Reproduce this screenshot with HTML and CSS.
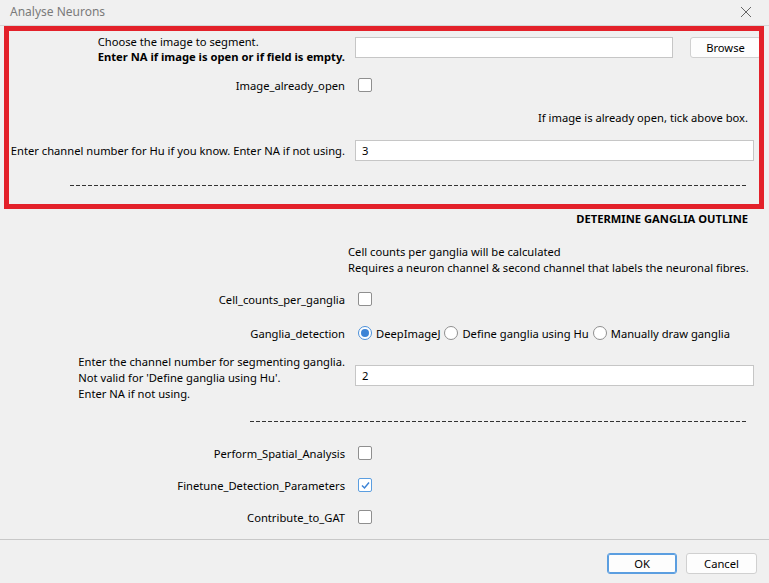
FILE: index.html
```html
<!DOCTYPE html>
<html>
<head>
<meta charset="utf-8">
<link rel="stylesheet" href="styles.css">
</head>
<body>
<div class="window">
  <div class="titlebar">
    <span class="title">Analyse Neurons</span>
    <svg class="close" width="12" height="12" viewBox="0 0 12 12"><path d="M1 1 L11 11 M11 1 L1 11" stroke="#666" stroke-width="1" fill="none"/></svg>
  </div>
  <div class="content">
    <div class="row row1">
      <div class="label"><div class="block">Choose the image to segment.<br><b>Enter NA if image is open or if field is empty.</b></div></div>
      <div class="field field-browse">
        <div class="input input-path"></div>
        <div class="btn browse">Browse</div>
      </div>
    </div>
    <div class="row crow row2">
      <div class="label">Image_already_open</div>
      <div class="field"><span class="cb"></span></div>
    </div>
    <div class="note note1">If image is already open, tick above box.</div>
    <div class="row row3">
      <div class="label nowrap">Enter channel number for Hu if you know. Enter NA if not using.</div>
      <div class="field"><div class="input">3</div></div>
    </div>
    <div class="dash dash1"></div>
    <div class="note heading">DETERMINE GANGLIA OUTLINE</div>
    <div class="row info">
      <div class="label"></div>
      <div class="field info-text">Cell counts per ganglia will be calculated<br>Requires a neuron channel &amp; second channel that labels the neuronal fibres.</div>
    </div>
    <div class="row crow row-cells">
      <div class="label">Cell_counts_per_ganglia</div>
      <div class="field"><span class="cb"></span></div>
    </div>
    <div class="row crow row-radio">
      <div class="label">Ganglia_detection</div>
      <div class="field radios">
        <span class="rb on"></span><span class="rl">DeepImageJ</span>
        <span class="rb"></span><span class="rl">Define ganglia using Hu</span>
        <span class="rb"></span><span class="rl">Manually draw ganglia</span>
      </div>
    </div>
    <div class="row row-multi">
      <div class="label"><div class="block">Enter the channel number for segmenting ganglia.<br>Not valid for 'Define ganglia using Hu'.<br>Enter NA if not using.</div></div>
      <div class="field"><div class="input input-multi">2</div></div>
    </div>
    <div class="dash dash2"></div>
    <div class="row crow row-sp">
      <div class="label">Perform_Spatial_Analysis</div>
      <div class="field"><span class="cb"></span></div>
    </div>
    <div class="row crow row-next">
      <div class="label">Finetune_Detection_Parameters</div>
      <div class="field"><span class="cb checked"><svg width="11" height="11" viewBox="0 0 11 11"><path d="M2 5.5 L4.5 8 L9 2.5" stroke="#3d84d6" stroke-width="1.5" fill="none"/></svg></span></div>
    </div>
    <div class="row crow row-next">
      <div class="label">Contribute_to_GAT</div>
      <div class="field"><span class="cb"></span></div>
    </div>
  </div>
  <div class="footer">
    <div class="btn ok">OK</div>
    <div class="btn cancel">Cancel</div>
  </div>
  <div class="highlight"></div>
</div>
</body>
</html>
```
FILE: styles.css
```css
* { box-sizing: border-box; }
html, body { margin: 0; padding: 0; }
body {
  background: #f0f0f0;
  font-family: "Noto Sans", "Open Sans", sans-serif;
  font-size: 11.2px;
  color: #000;
  width: 769px;
  height: 583px;
  overflow: hidden;
}
.window { position: relative; width: 769px; height: 583px; }
.titlebar {
  height: 26px;
  border-bottom: 1px solid #d6d6d6;
  display: flex;
  align-items: center;
  justify-content: space-between;
  padding: 0 17px 2px 10px;
}
.title { color: #7a7a7a; font-size: 12px; }
.close { display: block; }
.content { padding: 0; }
.row { display: flex; }
.label {
  width: 345px;
  flex: none;
  text-align: right;
  line-height: 15px;
  display: flex;
  justify-content: flex-end;
}
.block { text-align: left; }
.nowrap { white-space: nowrap; }
.field { margin-left: 10px; flex: none; width: 399px; }
.crow { height: 20px; align-items: center; }
.crow .label { align-items: center; }
.crow .field { display: flex; align-items: center; }

.row1 { margin-top: 8px; height: 30px; }
.field-browse { display: flex; width: 404px; }
.input {
  height: 21px;
  background: #fff;
  border: 1px solid #c6c6c6;
  padding: 0 0 0 6px;
  line-height: 19px;
}
.input-path { width: 318px; margin-top: 3px; flex: none; }
.btn {
  background: #fdfdfd;
  border: 1px solid #d0d0d0;
  border-radius: 3px;
  text-align: center;
  line-height: 19px;
  height: 21px;
}
.browse { margin-left: 17px; margin-top: 3px; width: 71px; flex: none; }

.row2 { margin-top: 11px; }
.cb {
  display: inline-flex;
  align-items: center;
  justify-content: center;
  width: 14px;
  height: 14px;
  margin-left: 3px;
  background: #fff;
  border: 1px solid #8f8f8f;
  border-radius: 2px;
}
.cb.checked { border-color: #5b9ee0; }
.cb svg { display: block; }

.note {
  width: 748px;
  text-align: right;
  line-height: 16px;
}
.note1 { margin-top: 15px; }
.row3 { margin-top: 14px; height: 21px; align-items: center; }
.row3 .label { align-items: center; }

.dash {
  height: 1px;
  background: repeating-linear-gradient(to right, #333 0 4px, transparent 4px 6px);
}
.dash1 { margin: 24px 21px 0 70px; }
.heading { margin-top: 25px; font-weight: bold; }

.info { margin-top: 17px; }
.info .field { margin-left: 3px; line-height: 16px; width: 420px; }
.row-cells { margin-top: 13px; }
.row-radio { margin-top: 14px; }
.radios { white-space: nowrap; }
.rb {
  display: inline-block;
  width: 14px;
  height: 14px;
  border-radius: 50%;
  border: 1px solid #8f8f8f;
  background: #fff;
  margin-left: 3px;
  position: relative;
  flex: none;
}
.rb.on { border-color: #4a8fd9; }
.rb.on::after {
  content: "";
  position: absolute;
  left: 2px; top: 2px;
  width: 8px; height: 8px;
  border-radius: 50%;
  background: #3d84d6;
}
.rl { margin-left: 4px; margin-right: 1px; }

.row-multi { margin-top: 11px; }
.row-multi .label { line-height: 16px; }
.input-multi { margin-top: 11px; }
.dash2 { margin: 19px 21px 0 250px; }
.row-sp { margin-top: 21px; }
.row-next { margin-top: 12px; }

.footer {
  position: absolute;
  left: 0; right: 0; bottom: 0;
  top: 539px;
  border-top: 1px solid #c8c8c8;
  display: flex;
  justify-content: flex-end;
  padding: 13px 12px 0 0;
  gap: 9px;
}
.ok { width: 70px; border: 1px solid #5b9ee0; box-shadow: inset 0 0 0 1px #5b9ee0; }
.cancel { width: 71px; }

.highlight {
  position: absolute;
  left: 4px; top: 26px;
  width: 760px; height: 183px;
  border: 5px solid #e3212a;
  pointer-events: none;
}
```
